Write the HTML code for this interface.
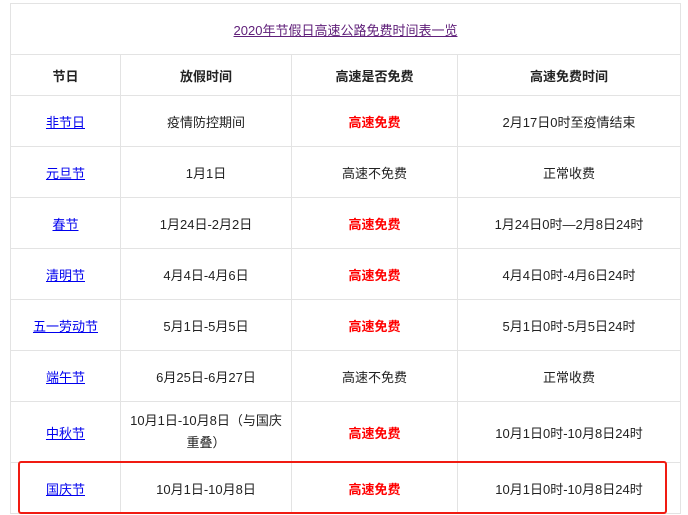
<!DOCTYPE html>
<html><head><meta charset="utf-8"><style>
body{margin:0;background:#fff;font-family:"Liberation Sans","Noto Sans CJK SC",sans-serif;font-size:13px;color:#222}
table{position:absolute;left:10px;top:3px;border-collapse:collapse;width:671px;table-layout:fixed}
td,th{border:1px solid #e3e3e3;text-align:center;padding:0;vertical-align:middle}
th{font-weight:bold;height:40px}
td{height:50px}
a{color:#0000ee;text-decoration:underline}
.t a{color:#60207a}
.r{color:#f00;font-weight:bold}
.box{position:absolute;left:18px;top:461px;width:645px;height:49px;border:2px solid #f01b12;border-radius:3px}
</style></head><body>
<table>
<colgroup><col style="width:110px"><col style="width:171px"><col style="width:166px"><col></colgroup>
<tr><td colspan="4" class="t" style="height:50px"><a>2020年节假日高速公路免费时间表一览</a></td></tr>
<tr><th>节日</th><th>放假时间</th><th>高速是否免费</th><th>高速免费时间</th></tr>
<tr><td><a>非节日</a></td><td>疫情防控期间</td><td class="r">高速免费</td><td>2月17日0时至疫情结束</td></tr>
<tr><td><a>元旦节</a></td><td>1月1日</td><td>高速不免费</td><td>正常收费</td></tr>
<tr><td><a>春节</a></td><td>1月24日-2月2日</td><td class="r">高速免费</td><td>1月24日0时—2月8日24时</td></tr>
<tr><td><a>清明节</a></td><td>4月4日-4月6日</td><td class="r">高速免费</td><td>4月4日0时-4月6日24时</td></tr>
<tr><td><a>五一劳动节</a></td><td>5月1日-5月5日</td><td class="r">高速免费</td><td>5月1日0时-5月5日24时</td></tr>
<tr><td><a>端午节</a></td><td>6月25日-6月27日</td><td>高速不免费</td><td>正常收费</td></tr>
<tr><td style="height:60px"><a>中秋节</a></td><td style="line-height:22px">10月1日-10月8日（与国庆<br>重叠）</td><td class="r">高速免费</td><td>10月1日0时-10月8日24时</td></tr>
<tr><td><a>国庆节</a></td><td>10月1日-10月8日</td><td class="r">高速免费</td><td>10月1日0时-10月8日24时</td></tr>
</table>
<div class="box"></div>
</body></html>
